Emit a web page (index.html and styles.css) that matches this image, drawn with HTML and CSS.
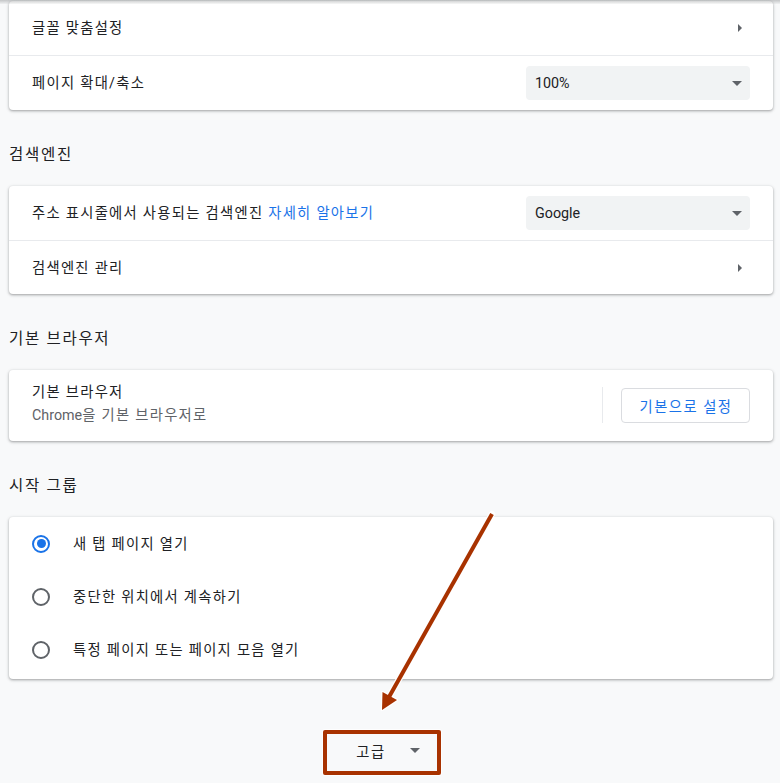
FILE: index.html
```html
<!DOCTYPE html>
<html lang="ko">
<head>
<meta charset="utf-8">
<title>설정</title>
<link rel="stylesheet" href="styles.css">
</head>
<body>
<div class="topshade"></div>
<main class="page">
  <section class="card first">
    <div class="row">
      <span class="label">글꼴 맞춤설정</span>
      <span class="chev"></span>
    </div>
    <div class="row sep">
      <span class="label">페이지 확대/축소</span>
      <div class="select"><span class="latin">100%</span><span class="caret"></span></div>
    </div>
  </section>

  <h2 class="title">검색엔진</h2>
  <section class="card">
    <div class="row">
      <span class="label">주소 표시줄에서 사용되는 검색엔진 <a class="link" href="#">자세히 알아보기</a></span>
      <div class="select"><span class="latin">Google</span><span class="caret"></span></div>
    </div>
    <div class="row sep short">
      <span class="label">검색엔진 관리</span>
      <span class="chev"></span>
    </div>
  </section>

  <h2 class="title">기본 브라우저</h2>
  <section class="card">
    <div class="row browser">
      <div class="two">
        <span class="line1">기본 브라우저</span>
        <span class="line2"><span class="latin">Chrome</span>을 기본 브라우저로</span>
      </div>
      <div class="vsep"></div>
      <button class="outline">기본으로 설정</button>
    </div>
  </section>

  <h2 class="title">시작 그룹</h2>
  <section class="card radios">
    <div class="radio-row"><span class="radio on"></span><span class="label">새 탭 페이지 열기</span></div>
    <div class="radio-row"><span class="radio"></span><span class="label">중단한 위치에서 계속하기</span></div>
    <div class="radio-row"><span class="radio"></span><span class="label">특정 페이지 또는 페이지 모음 열기</span></div>
  </section>

  <div class="advanced">
    <button class="adv-btn"><span>고급</span><span class="caret"></span></button>
  </div>
</main>

<svg class="annot" width="780" height="783" viewBox="0 0 780 783" aria-hidden="true">
  <line x1="492" y1="514" x2="389" y2="697" stroke="#ffffff" stroke-width="6.5" stroke-linecap="round"/>
  <polygon points="382.5,692 397,700 382,710" fill="#ffffff" stroke="#ffffff" stroke-width="2.5" stroke-linejoin="round"/>
  <line x1="492" y1="514" x2="389" y2="697" stroke="#a83200" stroke-width="4"/>
  <polygon points="382.5,692 397,700 382,710" fill="#a83200"/>
</svg>
<div class="redbox"></div>
</body>
</html>
```

FILE: styles.css
```css
* { box-sizing: border-box; }

html, body {
  margin: 0;
  padding: 0;
  background: #f8f9fa;
}

body {
  position: relative;
  width: 780px;
  height: 783px;
  overflow: hidden;
  font-family: Roboto, "Noto Sans CJK KR", sans-serif;
  font-size: 14.3px;
  letter-spacing: 1.3px;
  color: #202124;
}

.latin {
  letter-spacing: 0;
}

.topshade {
  position: absolute;
  top: 0;
  left: 0;
  right: 0;
  height: 4px;
  background: linear-gradient(rgba(60, 64, 67, 0.28), rgba(60, 64, 67, 0.04));
  z-index: 2;
}

.page {
  padding: 0 7px 0 9px;
}

.card {
  background: #ffffff;
  border-radius: 4px;
  box-shadow: 0 1px 2px rgba(60, 64, 67, 0.3), 0 1px 3px 1px rgba(60, 64, 67, 0.15);
}

.card.first {
  margin-top: 1px;
}

.row {
  display: flex;
  align-items: center;
  justify-content: space-between;
  height: 54px;
  padding: 0 23px;
}

.row.sep {
  border-top: 1px solid #e8eaed;
  height: 55px;
}

.row.sep.short {
  height: 54px;
}

.label {
  line-height: 20px;
}

.link {
  color: #1a73e8;
  text-decoration: none;
}

.chev {
  width: 0;
  height: 0;
  margin-right: 8px;
  border-top: 4.5px solid transparent;
  border-bottom: 4.5px solid transparent;
  border-left: 4.5px solid #5f6368;
}

.select {
  display: flex;
  align-items: center;
  justify-content: space-between;
  width: 224px;
  height: 34px;
  padding: 0 8px 0 9px;
  background: #f1f3f4;
  border-radius: 4px;
  color: #202124;
}

.caret {
  width: 0;
  height: 0;
  border-left: 5px solid transparent;
  border-right: 5px solid transparent;
  border-top: 5px solid #5f6368;
}

.title {
  margin: 35px 0 21px;
  font-size: 15.5px;
  font-weight: 400;
  line-height: 20px;
  letter-spacing: 1.7px;
  color: #202124;
}

.row.browser {
  height: 71px;
  padding: 10px 23px 15px;
  justify-content: flex-start;
}

.two {
  display: flex;
  flex-direction: column;
  flex: 1;
}

.line1 {
  line-height: 24px;
}

.line2 {
  line-height: 22px;
  color: #5f6368;
}

.vsep {
  align-self: center;
  width: 1px;
  height: 36px;
  margin-top: 4px;
  background: #e8eaed;
}

.outline {
  align-self: center;
  margin: 4px 0 0 18px;
  width: 129px;
  height: 35px;
  border: 1px solid #dadce0;
  border-radius: 4px;
  background: #ffffff;
  color: #1a73e8;
  font-family: inherit;
  font-size: 14.3px;
  letter-spacing: 1.5px;
  padding: 0 0 0 1px;
}

.radios {
  padding: 0 0 3px;
}

.radio-row {
  display: flex;
  align-items: center;
  height: 53px;
  padding: 0 23px;
  gap: 23px;
}

.radio {
  width: 18px;
  height: 18px;
  border-radius: 50%;
  border: 2px solid #5f6368;
  flex: none;
  display: flex;
  align-items: center;
  justify-content: center;
}

.radio.on {
  border-color: #1a73e8;
}

.radio.on::after {
  content: "";
  width: 9px;
  height: 9px;
  border-radius: 50%;
  background: #1a73e8;
}

.advanced {
  display: flex;
  justify-content: center;
  margin-top: 53px;
  padding-right: 6px;
}

.adv-btn {
  display: flex;
  align-items: center;
  gap: 24px;
  height: 36px;
  padding: 0;
  border: none;
  background: transparent;
  font-family: inherit;
  font-size: 14.3px;
  letter-spacing: 1.6px;
  color: #202124;
}

.annot {
  position: absolute;
  top: 0;
  left: 0;
  pointer-events: none;
  z-index: 3;
}

.redbox {
  position: absolute;
  left: 323px;
  top: 730px;
  width: 118px;
  height: 45px;
  border: 4px solid #a83200;
  border-radius: 2px;
  box-shadow: 0 0 0 1px rgba(255, 255, 255, 0.8);
  pointer-events: none;
  z-index: 3;
}
```
